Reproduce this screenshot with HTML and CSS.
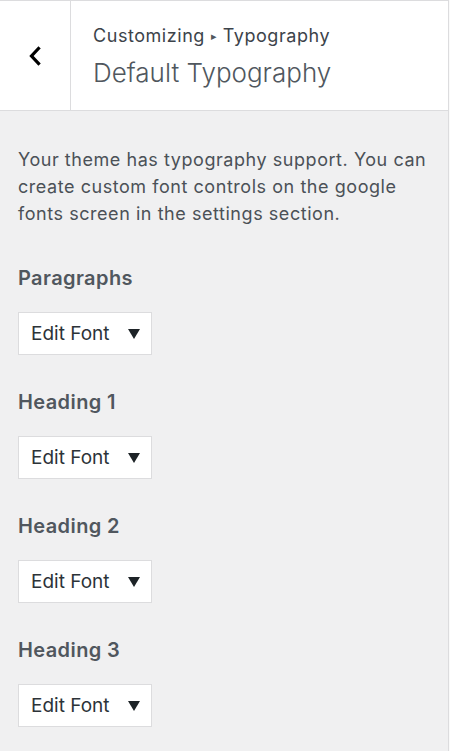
FILE: index.html
```html
<!DOCTYPE html>
<html lang="en">
<head>
<meta charset="utf-8">
<title>Default Typography</title>
<link rel="stylesheet" href="styles.css">
</head>
<body>
<div class="panel">
  <header class="head">
    <div class="back">
      <svg width="14" height="20" viewBox="0 0 14 20" aria-hidden="true"><path d="M10.5 2.5 L3.5 10 L10.5 17.5" fill="none" stroke="#000" stroke-width="3.2" stroke-linecap="square" stroke-linejoin="miter"/></svg>
    </div>
    <div class="titles">
      <div class="crumb">Customizing <span class="sep">▸</span> Typography</div>
      <div class="title">Default Typography</div>
    </div>
  </header>
  <main class="body">
    <p class="desc">Your theme has typography support. You can create custom font controls on the google fonts screen in the settings section.</p>
    <div class="control">
      <div class="label">Paragraphs</div>
      <button class="edit">Edit Font <span class="tri"></span></button>
    </div>
    <div class="control">
      <div class="label">Heading 1</div>
      <button class="edit">Edit Font <span class="tri"></span></button>
    </div>
    <div class="control">
      <div class="label">Heading 2</div>
      <button class="edit">Edit Font <span class="tri"></span></button>
    </div>
    <div class="control">
      <div class="label">Heading 3</div>
      <button class="edit">Edit Font <span class="tri"></span></button>
    </div>
  </main>
</div>
</body>
</html>
```
FILE: styles.css
```css
html, body {
  margin: 0;
  padding: 0;
  background: #fafafa;
}
body {
  font-family: Inter, "Noto Sans", "Liberation Sans", sans-serif;
  width: 450px;
  height: 751px;
  overflow: hidden;
}
.panel {
  width: 448px;
  height: 751px;
  border-right: 1px solid #dcdcde;
  background: #f0f0f1;
  display: flex;
  flex-direction: column;
}
.head {
  flex-shrink: 0;
  display: flex;
  height: 109px;
  background: #fff;
  border-top: 1px solid #dcdcde;
  border-bottom: 1px solid #dcdcde;
}
.back {
  width: 70px;
  border-right: 1px solid #dcdcde;
  display: flex;
  align-items: center;
  justify-content: center;
}
.titles {
  padding-left: 22px;
  padding-top: 23px;
  display: flex;
  flex-direction: column;
}
.crumb {
  font-size: 18px;
  line-height: 24px;
  letter-spacing: 0.55px;
  color: #3c434a;
}
.sep {
  font-size: 11px;
  vertical-align: 2px;
  color: #50575e;
}
.title {
  font-size: 26px;
  font-weight: 300;
  line-height: 34px;
  margin-top: 8px;
  color: #50575e;
}
.body {
  padding: 35px 18px 0 18px;
}
.desc {
  margin: 0 0 38px 0;
  font-size: 18px;
  line-height: 27px;
  letter-spacing: 0.55px;
  color: #4b5157;
}
.control {
  margin-bottom: 34px;
}
.label {
  font-size: 20px;
  line-height: 26px;
  letter-spacing: 0.4px;
  font-weight: 600;
  color: #50575e;
  margin-bottom: 21px;
}
.edit {
  box-sizing: border-box;
  width: 134px;
  height: 43px;
  background: #fff;
  border: 1px solid #dcdcde;
  border-radius: 0;
  padding: 0 11px 0 12px;
  display: flex;
  align-items: center;
  justify-content: space-between;
  font-family: inherit;
  font-size: 19px;
  color: #2c3338;
}
.tri {
  width: 0;
  height: 0;
  border-left: 6px solid transparent;
  border-right: 6px solid transparent;
  border-top: 10px solid #1d2327;
}
```
